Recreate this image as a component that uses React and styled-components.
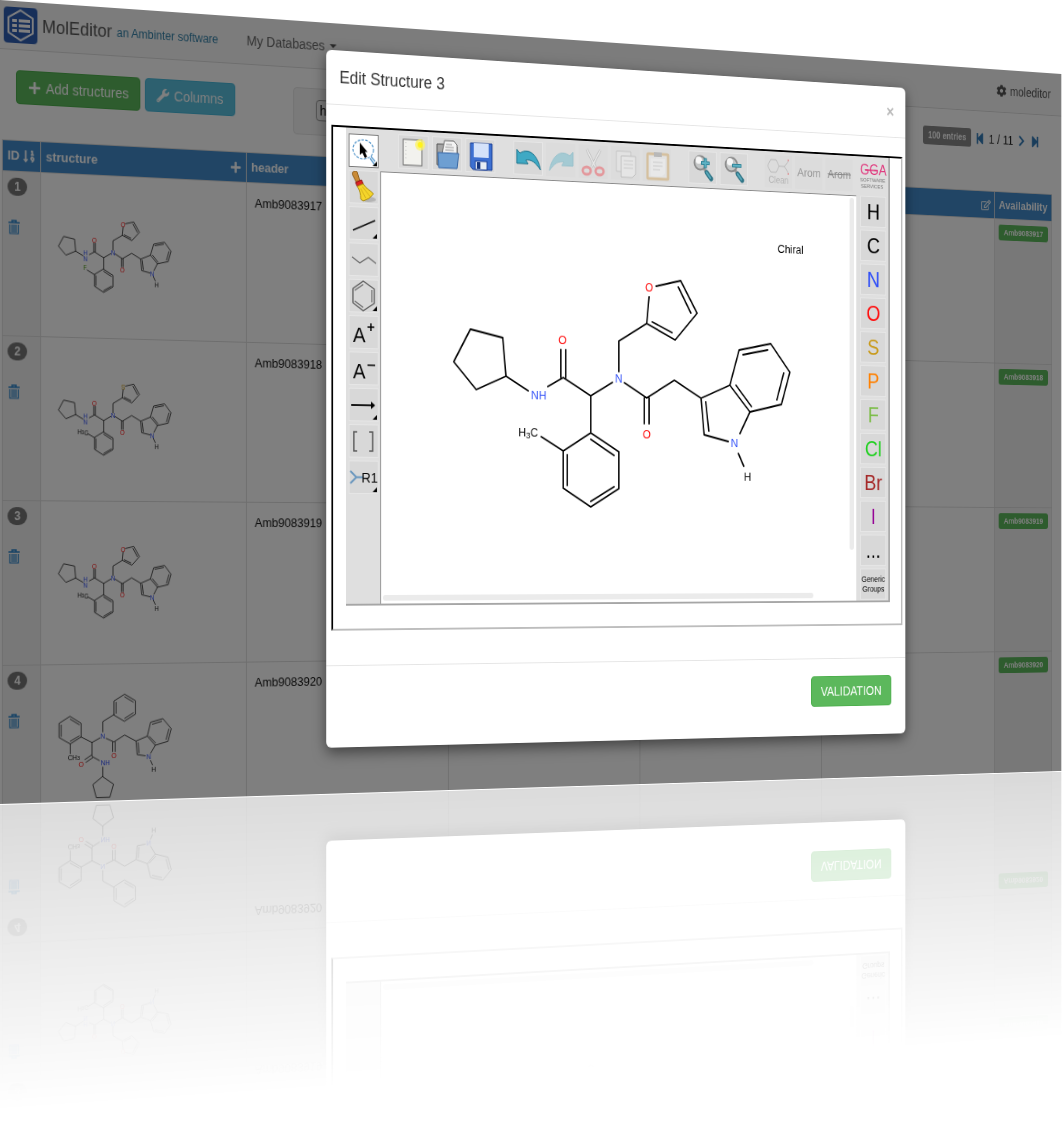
import React from "react";
import styled, { createGlobalStyle, css } from "styled-components";
import {
  FaPlus,
  FaWrench,
  FaCog,
  FaStepBackward,
  FaStepForward,
  FaChevronRight,
  FaRegEdit,
  FaSortNumericDown,
} from "react-icons/fa";

const GlobalStyle = createGlobalStyle`
  *, *::before, *::after { box-sizing: border-box; }
  body {
    margin: 0;
    background: #fff;
    color: #333;
    font-family: "Liberation Sans", Arial, sans-serif;
    font-size: 14px;
    line-height: 20px;
  }
  button, select { font-family: inherit; }
`;

/* ---------- 3D stage ---------- */

const Stage = styled.div`
  height: 100vh;
  overflow: hidden;
  perspective: 2900px;
  perspective-origin: 0 556px;
`;

const Plane = styled.div`
  position: relative;
  width: 122.6%;
  max-height: 804px;
  overflow: hidden;
  background: #fff;
  transform: rotateY(20deg);
  transform-origin: 0 0;
  -webkit-box-reflect: below 1px linear-gradient(transparent 62%, rgba(0, 0, 0, 0.28));
`;

/* ---------- Page behind the dialog ---------- */

const Navbar = styled.header`
  display: flex;
  align-items: center;
  height: 49px;
  padding: 0 15px 0 4px;
  background: #f8f8f8;
  border-bottom: 1px solid #ddd;
`;

const Brand = styled.a`
  display: flex;
  align-items: center;
  gap: 5px;
  color: #555;
  font-size: 18px;
  text-decoration: none;
`;

const Tagline = styled.small`
  color: #3180a8;
  font-size: 12px;
  line-height: 16px;
  padding-top: 2px;
`;

const NavMenu = styled.button`
  display: flex;
  align-items: center;
  gap: 6px;
  margin-left: 32px;
  padding: 0;
  border: 0;
  background: none;
  color: #666;
  font-size: 14px;
  &::after {
    content: "";
    border: 4px solid transparent;
    border-top-color: #555;
    border-bottom: 0;
  }
`;

const UserLink = styled.a`
  display: flex;
  align-items: center;
  gap: 5px;
  margin-left: auto;
  color: #555;
  text-decoration: none;
`;

const Tools = styled.div`
  display: flex;
  align-items: flex-start;
  height: 90px;
  padding: 20px 30px 0 17px;
  gap: 5px;
`;

const Button = styled.button`
  display: inline-flex;
  align-items: center;
  gap: 5px;
  height: 34px;
  padding: 0 12px;
  border: 1px solid ${(p) => p.$edge};
  border-radius: 4px;
  background: ${(p) => p.$fill};
  color: #fff;
  font-size: 14px;
`;

const Well = styled.div`
  width: 420px;
  height: 49px;
  margin-left: 61px;
  padding: 11px 25px;
  border: 1px solid #e3e3e3;
  border-radius: 4px;
  background: #f5f5f5;
`;

const FieldSelect = styled.select`
  height: 22px;
  padding: 0;
  border: 1px solid #999;
  border-radius: 4px;
  background: #f4f4f4;
  color: #111;
  font-size: 14px;
`;

const Pager = styled.nav`
  display: flex;
  align-items: center;
  gap: 5px;
  margin-left: auto;
  color: #222;
  a {
    display: flex;
    color: #337ab7;
  }
`;

const Count = styled.span`
  padding: 0 7px;
  border-radius: 3px;
  background: #888;
  color: #fff;
  font-size: 10px;
  font-weight: bold;
  line-height: 21px;
`;

const Grid = styled.table`
  width: calc(100% - 15px);
  margin-left: 2px;
  border-collapse: collapse;
  table-layout: fixed;
`;

const HeadCell = styled.th`
  height: 31px;
  padding: 0 5px;
  border: 1px solid #ddd;
  background: #428bca;
  color: #fff;
  font-size: 13px;
  text-align: left;
`;

const HeadInner = styled.div`
  display: flex;
  align-items: center;
  justify-content: space-between;
`;

const Cell = styled.td`
  height: 165px;
  padding: ${(p) => p.$pad || "0"};
  border: 1px solid #ddd;
  background: ${(p) => (p.$tint ? "#f1f1f1" : "#fff")};
  color: #111;
  font-size: 13px;
  line-height: 18px;
  vertical-align: ${(p) => p.$align || "top"};
`;

const RowTools = styled.div`
  display: flex;
  flex-direction: column;
  align-items: flex-start;
  gap: 24px;
`;

const RowNumber = styled.span`
  min-width: 21px;
  border-radius: 9px;
  background: #777;
  color: #fff;
  font-size: 12px;
  font-weight: bold;
  line-height: 18px;
  text-align: center;
`;

const IconButton = styled.button`
  display: flex;
  padding: 0;
  border: 0;
  background: none;
  color: #2e86cc;
`;

const StockLink = styled.a`
  display: block;
  border-radius: 3px;
  background: #5cb85c;
  color: #fff;
  font-size: 9px;
  font-weight: bold;
  line-height: 18px;
  text-align: center;
  text-decoration: none;
`;

/* ---------- Dialog ---------- */

const Overlay = styled.div`
  position: absolute;
  inset: 0;
  padding: 28px 0 0 27.8%;
  background: rgba(0, 0, 0, 0.5);
`;

const Dialog = styled.section`
  width: 77%;
  border-radius: 6px;
  background: #fff;
  box-shadow: 0 5px 15px rgba(0, 0, 0, 0.5);
`;

const DialogHeader = styled.div`
  display: flex;
  align-items: center;
  justify-content: space-between;
  height: 57px;
  padding: 0 15px;
  border-bottom: 1px solid #e5e5e5;
`;

const Title = styled.h1`
  margin: 0;
  font-size: 18px;
  font-weight: normal;
  line-height: 26px;
`;

const Close = styled.button`
  padding: 0;
  border: 0;
  background: none;
  color: #bbb;
  font-size: 18px;
  font-weight: bold;
  line-height: 18px;
`;

const DialogBody = styled.div`
  padding: 21px 4px 36px 6px;
`;

const Frame = styled.div`
  padding: 0 15px 24px;
  border: 2px solid #bdbdbd;
  border-top-color: #000;
  border-left-color: #000;
`;

const DialogFooter = styled.div`
  display: flex;
  justify-content: flex-end;
  height: 86px;
  padding: 19px;
  border-top: 1px solid #e5e5e5;
`;

/* ---------- Structure editor ---------- */

const Editor = styled.div`
  display: flex;
  background: #dfdfdf;
  border: solid #a6a6a6;
  border-width: 0 2px 2px 0;
`;

const LeftBar = styled.div`
  display: flex;
  flex: 0 0 40px;
  flex-direction: column;
  gap: 3px;
  padding: 6px 0 0 3px;
`;

const Middle = styled.div`
  display: flex;
  flex: 1;
  flex-direction: column;
`;

const TopBar = styled.div`
  display: flex;
  gap: 22px;
  height: 44px;
  padding: 4px 0 0 21px;
`;

const Group = styled.div`
  display: flex;
  gap: 4px;
`;

const RightBar = styled.div`
  display: flex;
  flex: 0 0 43px;
  flex-direction: column;
  gap: 3px;
  padding: 0 0 1px 5px;
`;

const Tool = styled.button`
  display: flex;
  flex: none;
  flex-direction: column;
  align-items: center;
  justify-content: center;
  width: 35px;
  height: 35px;
  padding: 0;
  border: 1px solid ${(p) => (p.$active ? "#777" : "#e6e6e6")};
  background: ${(p) => (p.$active ? "#fff" : "#d8d8d8")};
  color: ${(p) => p.$ink || "#000"};
  font-size: ${(p) => p.$size || 24}px;
  line-height: ${(p) => p.$line || 28}px;
  ${(p) =>
    p.$wide &&
    css`
      width: 36px;
      height: 36px;
    `}
  ${(p) =>
    p.$off &&
    css`
      border-color: transparent;
      background: #dcdcdc;
      svg {
        opacity: 0.35;
      }
    `}
`;

const Logo = styled.svg`
  width: 37px;
  height: 41px;
`;

const Canvas = styled.div`
  display: grid;
  flex: 1;
  grid-template: 1fr 6px / 1fr 6px;
  gap: 2px;
  padding: 2px 3px 3px 2px;
  border: solid #8a8a8a;
  border-width: 1px 0 0 1px;
  background: #fff;
`;

const ScrollV = styled.div`
  height: 394px;
  border-radius: 3px;
  background: #ebebeb;
`;

const ScrollH = styled.div`
  width: 92%;
  height: 6px;
  border-radius: 3px;
  background: #ebebeb;
`;

/* ---------- Molecules ---------- */

const BLUE = "#304ff7";
const RED = "#ff0d0d";

const mainBonds = [
  "M106 162L145 170L149 211L113 226L86 197Z",
  "M149 211L176 226",
  "M200 221L219 211L253 230L280 215",
  "M216 211V181M222 211V181",
  "M253 230V270",
  "M253 270L288 290V330L253 350L219 330V290Z",
  "M253 277L282 294M224 294V327M253 344L282 328",
  "M192 275L219 290",
  "M288 203V170L323 150",
  "M326 121L323 150L359 167L387 137L366 102L335 109",
  "M363 109L379 137M355 159L330 148",
  "M295 215L323 231L358 211L392 230",
  "M320 231V259M326 231V259",
  "M427 277L396 270L392 230L429 215L455 244L442 268",
  "M398 234L402 266",
  "M429 215L441 176L482 168L507 199L496 235L455 244",
  "M446 181L478 175M499 200L490 230M437 215L457 238",
  "M440 290L447 304",
].join("");

const benzylBonds = [
  "M220 674L255 695V736L220 756L184 736V695Z",
  "M220 682L249 699M249 733L220 748M191 733V699",
  "M220 756V785M255 736L290 753L316 740",
  "M325 722V691L361 671",
  "M361 671V630L396 610L431 630V671L396 691Z",
  "M368 667V634M396 618L424 634M424 667L396 683",
  "M336 742L361 753L396 733L433 752",
  "M357 753V782M365 753V782",
  "M463 797L437 793L433 752L470 738L496 766L481 790",
  "M440 757L443 788",
  "M470 738L481 696L521 686L549 717L538 755L496 766",
  "M487 702L517 694M541 718L532 749M477 739L497 759",
  "M481 812L487 825",
  "M290 753V795L314 808M288 791L267 804M292 799L271 812",
  "M325 828V857",
  "M325 857L360 880L348 919H304L293 881Z",
].join("");

const Atom = ({ x, y, fill = "#111", children }) => (
  <text x={x} y={y} fill={fill} textAnchor="middle" dominantBaseline="central">
    {children}
  </text>
);

const Label = ({ x, y, before, after }) => (
  <text x={x} y={y} fill="#111" textAnchor="middle" dominantBaseline="central">
    {before}
    <tspan fontSize="0.75em" dy="2">3</tspan>
    <tspan dy="-2">{after}</tspan>
  </text>
);

function MainAtoms({ hetero = "O", substituent = "CH3", stacked }) {
  return (
    <>
      {stacked ? (
        <>
          <Atom x={185} y={214} fill={BLUE}>H</Atom>
          <Atom x={185} y={235} fill={BLUE}>N</Atom>
        </>
      ) : (
        <Atom x={189} y={231} fill={BLUE}>NH</Atom>
      )}
      <Atom x={218} y={171} fill={RED}>O</Atom>
      <Atom x={288} y={211} fill={BLUE}>N</Atom>
      <Atom x={326} y={111} fill={hetero === "S" ? "#c99a19" : RED}>{hetero}</Atom>
      <Atom x={323} y={271} fill={RED}>O</Atom>
      <Atom x={435} y={279} fill={BLUE}>N</Atom>
      <Atom x={452} y={316}>H</Atom>
      {substituent === "F" ? (
        <Atom x={184} y={268} fill="#4f9a1a">F</Atom>
      ) : (
        <Label x={176} y={271} before="H" after="C" />
      )}
    </>
  );
}

const MolArt = styled.svg`
  display: block;
  fill: none;
  stroke-linecap: round;
  stroke-linejoin: round;
  font-family: "Liberation Sans", Arial, sans-serif;
`;

function Thumb({ row }) {
  if (row.benzyl) {
    return (
      <MolArt width="132" height="118" viewBox="178 588 390 350" fontSize="21" aria-label={row.name}>
        <path d={benzylBonds} stroke="#222" strokeWidth="2.4" />
        <Atom x={325} y={734} fill={BLUE}>N</Atom>
        <Atom x={361} y={795} fill={RED}>O</Atom>
        <Atom x={255} y={817} fill={RED}>O</Atom>
        <Atom x={333} y={816} fill={BLUE}>NH</Atom>
        <Atom x={475} y={801} fill={BLUE}>N</Atom>
        <Atom x={491} y={838}>H</Atom>
        <text x="212" y="804" fill="#111">
          CH<tspan fontSize="0.75em">3</tspan>
        </text>
      </MolArt>
    );
  }
  return (
    <MolArt width="129" height="79" viewBox="80 94 440 270" fontSize="22" aria-label={row.name}>
      <path d={mainBonds} stroke="#222" strokeWidth="2.8" />
      <MainAtoms hetero={row.hetero} substituent={row.substituent} stacked />
    </MolArt>
  );
}

/* ---------- Icons ---------- */

const BrandIcon = () => (
  <svg width="36" height="36" viewBox="0 0 36 36" aria-hidden="true">
    <rect width="36" height="36" rx="4" fill="#2f5fb3" />
    <path d="M18 3L31 10.500V25.500L18 33L5 25.500V10.500Z" fill="none" stroke="#fff" strokeWidth="2" />
    <g fill="#fff">
      <path d="M9 12h5v3H9zM16 12h12v3H16zM9 17h5v3H9zM16 17h12v3H16zM9 22h5v3H9zM16 22h12v3H16z" />
    </g>
  </svg>
);

const TrashIcon = () => (
  <svg width="14" height="15" viewBox="0 0 14 15" fill="none" stroke="currentColor" aria-hidden="true">
    <path d="M1 3H13M5 2.500V1H9V2.500" strokeWidth="1.600" />
    <path d="M2.500 5V14H11.500V5M5 5V13M7 5V13M9 5V13" strokeWidth="1.200" />
  </svg>
);

const Corner = () => <path d="M32 27V32H27Z" fill="#000" />;

const Glyph = ({ children }) => (
  <svg width="33" height="33" viewBox="0 0 33 33" fill="none" aria-hidden="true">
    {children}
  </svg>
);

const LassoIcon = () => (
  <Glyph>
    <ellipse cx="16" cy="15" rx="12" ry="10" stroke="#4a90c8" strokeWidth="1.200" strokeDasharray="3 1.500" />
    <path d="M25 22L30 27M24 24L29 30" stroke="#4a90c8" strokeWidth="1.200" />
    <path d="M12 8V21L15 18.500L18 24L20.500 22.500L18 17.500H21Z" fill="#000" />
    <Corner />
  </Glyph>
);

const BroomIcon = () => (
  <Glyph>
    <ellipse cx="22" cy="29" rx="9" ry="3" fill="#b4b4b4" />
    <path d="M6 0C3 1 3 3 4 5L8 12L12 10L9 1C8.500 0 7 0 6 0Z" fill="#c98a35" stroke="#8a5a18" />
    <path d="M7 12L14 9L16 13L9 16Z" fill="#d22" stroke="#811" />
    <path d="M9 16L16 13C19 18 24 19 28 23L23 28L16 31L13 29C13 24 12 20 9 16Z" fill="#f5d52a" stroke="#a98a10" />
    <path d="M13 18L19 28M15 16L24 26" stroke="#d0ac1c" />
  </Glyph>
);

const BondIcon = () => (
  <Glyph>
    <path d="M4 24L30 13" stroke="#111" strokeWidth="1.600" />
    <Corner />
  </Glyph>
);

const ChainIcon = () => (
  <Glyph>
    <path d="M3 14L12 20L22 14L31 20" stroke="#666" strokeWidth="1.200" />
  </Glyph>
);

const BenzeneIcon = () => (
  <Glyph>
    <path d="M16 1L29 9V24L16 32L4 24V9Z" stroke="#555" strokeWidth="1.300" />
    <path d="M6 11L16 4.500M26 10V23M6 22L16 28.500" stroke="#666" strokeWidth="1.200" />
    <Corner />
  </Glyph>
);

const ChargeIcon = ({ sign }) => (
  <Glyph>
    <text x="4" y="27" fontSize="22" fill="#000">A</text>
    <path d={sign === "+" ? "M21 11H29M25 7V15" : "M21 13H30"} stroke="#000" strokeWidth="1.500" />
  </Glyph>
);

const ArrowIcon = () => (
  <Glyph>
    <path d="M2 17H27" stroke="#000" strokeWidth="1.800" />
    <path d="M25 13L30 17L25 21Z" fill="#000" />
    <Corner />
  </Glyph>
);

const BracketIcon = () => (
  <Glyph>
    <path d="M9 7H5V27H9M23 7H27V27H23" stroke="#555" strokeWidth="1.600" />
  </Glyph>
);

const RGroupIcon = () => (
  <Glyph>
    <path d="M1 10L8 16.500L1 23M8 16.500H16" stroke="#6795bd" strokeWidth="2" />
    <text x="14" y="22" fontSize="15" fill="#000">R1</text>
    <Corner />
  </Glyph>
);

const NewIcon = () => (
  <Glyph>
    <rect x="4" y="3" width="22" height="27" fill="#f2f2ee" stroke="#666" />
    <path d="M7 6V26" stroke="#bbb" strokeDasharray="1 3" />
    <circle cx="24" cy="8" r="6" fill="#fbf36a" opacity="0.8" />
    <circle cx="24" cy="8" r="3" fill="#fff21a" />
  </Glyph>
);

const OpenIcon = () => (
  <Glyph>
    <path d="M4 28V6H12L13 8H28V28Z" fill="#a5a5a5" stroke="#555" />
    <path d="M10 16L13 2H24L28 6V16Z" fill="#f3f3f3" stroke="#666" />
    <path d="M15 6H22M14 9H24M14 12H24" stroke="#999" />
    <path d="M5 15H30L28 31H6Z" fill="#6e9fd2" stroke="#3465a4" />
  </Glyph>
);

const SaveIcon = () => (
  <Glyph>
    <path d="M4 3H30V31H7L4 28Z" fill="#3d70d2" stroke="#1b3f94" />
    <rect x="8" y="3" width="18" height="15" fill="#d4e2fa" />
    <rect x="10" y="22" width="14" height="9" fill="#e8edf5" stroke="#1b3f94" />
    <rect x="12" y="23" width="4" height="7" fill="#16357e" />
  </Glyph>
);

const UndoIcon = () => (
  <Glyph>
    <path d="M2 22V7L6 11C17 4 28 12 31 28C25 20 20 17 13 18L16 22Z" fill="#3fa9c4" stroke="#1b7089" />
  </Glyph>
);

const RedoIcon = () => (
  <Glyph>
    <path d="M31 22V7L27 11C16 4 5 12 2 28C8 20 13 17 20 18L17 22Z" fill="#3fa9c4" stroke="#1b8fae" />
  </Glyph>
);

const CutIcon = () => (
  <Glyph>
    <path d="M8 3L19 22M25 3L14 22" stroke="#777" strokeWidth="3" />
    <path d="M8 3L19 22M25 3L14 22" stroke="#fff" strokeWidth="1.500" />
    <ellipse cx="8" cy="26" rx="5" ry="4" stroke="#f01c26" strokeWidth="3" />
    <ellipse cx="24" cy="26" rx="5" ry="4" stroke="#f01c26" strokeWidth="3" />
  </Glyph>
);

const CopyIcon = () => (
  <Glyph>
    <path d="M5 3H23V25H5Z" fill="#eee" stroke="#999" />
    <path d="M11 8H29V27L25 31H11Z" fill="#f8f8f8" stroke="#888" />
    <path d="M14 13H26M14 17H26M14 21H26" stroke="#aaa" />
  </Glyph>
);

const PasteIcon = () => (
  <Glyph>
    <rect x="4" y="4" width="26" height="27" rx="1" fill="#eee" stroke="#c98d30" strokeWidth="3" />
    <path d="M8 9H26V25L22 28H8Z" fill="#fff" />
    <path d="M12 2H22V7H12Z" fill="#777" />
    <path d="M11 13H23M11 17H23M11 21H20" stroke="#aaa" />
  </Glyph>
);

const ZoomIcon = ({ sign }) => (
  <Glyph>
    <path d="M17 16L21 21" stroke="#999" strokeWidth="3" />
    <path d="M21 21L27 28" stroke="#2f7486" strokeWidth="5" strokeLinecap="round" />
    <path d="M21 21L26 27" stroke="#58a9ba" strokeWidth="2" strokeLinecap="round" />
    <circle cx="13" cy="11" r="7.500" fill="#c4c6c6" stroke="#8a8a8a" strokeWidth="2" />
    <circle cx="11" cy="8" r="4" fill="#f6f6f6" />
    <path d={sign === "+" ? "M14 11H25M19.500 5.500V16.500" : "M14 12H26"} stroke="#2d8296" strokeWidth="4" />
    <path d={sign === "+" ? "M15 11H24M19.500 6.500V15.500" : "M15 12H25"} stroke="#5fb2c4" strokeWidth="2" />
  </Glyph>
);

const CleanIcon = () => (
  <svg width="32" height="19" viewBox="0 0 32 19" fill="none" stroke="#777" aria-hidden="true">
    <path d="M6 2H13L17 9L13 16H6L2 9ZM17 9H24L29 3M24 9L29 16" />
    <path d="M29 1V3M29 16V18" stroke="#e0343c" strokeWidth="2" />
  </svg>
);

/* ---------- Data ---------- */

const rows = [
  { id: 1, name: "Amb9083917", hetero: "O", substituent: "F" },
  { id: 2, name: "Amb9083918", hetero: "S" },
  { id: 3, name: "Amb9083919", hetero: "O" },
  { id: 4, name: "Amb9083920", benzyl: true },
];

const leftTools = [
  ["Select", <LassoIcon />],
  ["Erase", <BroomIcon />],
  ["Bond", <BondIcon />],
  ["Chain", <ChainIcon />],
  ["Ring", <BenzeneIcon />],
  ["Charge plus", <ChargeIcon sign="+" />],
  ["Charge minus", <ChargeIcon sign="-" />],
  ["Reaction arrow", <ArrowIcon />],
  ["S-group", <BracketIcon />],
  ["R-group", <RGroupIcon />],
];

const elements = [
  ["H", "#000"],
  ["C", "#000"],
  ["N", BLUE],
  ["O", RED],
  ["S", "#c99a19"],
  ["P", "#ff8000"],
  ["F", "#78bc42"],
  ["Cl", "#1fd01f"],
  ["Br", "#a62929"],
  ["I", "#940094"],
  ["...", "#000"],
];

const TopTool = ({ label, off, children, ...rest }) => (
  <Tool $wide $off={off} disabled={off} aria-label={label} {...rest}>
    {children}
  </Tool>
);

const Struck = styled.s`
  color: inherit;
`;

function StructureEditor() {
  return (
    <Editor>
      <LeftBar>
        {leftTools.map(([label, icon], i) => (
          <Tool key={label} aria-label={label} $active={i === 0}>
            {icon}
          </Tool>
        ))}
      </LeftBar>
      <Middle>
        <TopBar>
          <Group>
            <TopTool label="New"><NewIcon /></TopTool>
            <TopTool label="Open"><OpenIcon /></TopTool>
            <TopTool label="Save"><SaveIcon /></TopTool>
          </Group>
          <Group>
            <TopTool label="Undo"><UndoIcon /></TopTool>
            <TopTool label="Redo" off><RedoIcon /></TopTool>
            <TopTool label="Cut" off><CutIcon /></TopTool>
            <TopTool label="Copy" off><CopyIcon /></TopTool>
            <TopTool label="Paste" off><PasteIcon /></TopTool>
          </Group>
          <Group>
            <TopTool label="Zoom in"><ZoomIcon sign="+" /></TopTool>
            <TopTool label="Zoom out"><ZoomIcon sign="-" /></TopTool>
          </Group>
          <Group>
            <TopTool label="Clean" off $ink="#b4b4b4" $size={10} $line={12}>
              <CleanIcon />
              Clean
            </TopTool>
            <TopTool label="Arom" off $ink="#999" $size={13}>Arom</TopTool>
            <TopTool label="Dearom" off $ink="#888" $size={13}>
              <Struck>Arom</Struck>
            </TopTool>
          </Group>
        </TopBar>
        <Canvas>
          <MolArt width="582" height="440" viewBox="2 2 582 440" fontSize="13" aria-label="Structure 3">
            <path d={mainBonds} stroke="#000" strokeWidth="1.800" />
            <MainAtoms />
            <text x="491" y="67" fill="#000">Chiral</text>
          </MolArt>
          <ScrollV />
          <ScrollH />
        </Canvas>
      </Middle>
      <RightBar>
        <Logo viewBox="0 0 37 41" aria-label="GGA Software Services">
          <text x="0" y="20" fontSize="16" fill="#e0337a">GGA</text>
          <path d="M7 15H22" stroke="#e0337a" strokeWidth="1.500" />
          <text x="0" y="28" fontSize="6" fill="#777">SOFTWARE</text>
          <text x="1" y="35" fontSize="6" fill="#777">SERVICES</text>
        </Logo>
        {elements.map(([symbol, ink]) => (
          <Tool key={symbol} $ink={ink}>{symbol}</Tool>
        ))}
        <Tool $size={9} $line={11}>Generic Groups</Tool>
      </RightBar>
    </Editor>
  );
}

function StructureTable() {
  return (
    <Grid>
      <colgroup>
        <col style={{ width: 41 }} />
        <col style={{ width: 227 }} />
        <col />
        <col />
        <col />
        <col />
        <col style={{ width: 80 }} />
      </colgroup>
      <thead>
        <tr>
          <HeadCell>
            <HeadInner>ID <FaSortNumericDown size={14} /></HeadInner>
          </HeadCell>
          <HeadCell>
            <HeadInner>structure <FaPlus size={13} /></HeadInner>
          </HeadCell>
          <HeadCell>header</HeadCell>
          <HeadCell />
          <HeadCell />
          <HeadCell>
            <HeadInner><span /><FaRegEdit size={13} /></HeadInner>
          </HeadCell>
          <HeadCell>Availability</HeadCell>
        </tr>
      </thead>
      <tbody>
        {rows.map((row) => (
          <tr key={row.id}>
            <Cell $tint $pad="6px 5px">
              <RowTools>
                <RowNumber>{row.id}</RowNumber>
                <IconButton aria-label={`Delete ${row.name}`}><TrashIcon /></IconButton>
              </RowTools>
            </Cell>
            <Cell $pad="0 0 0 17px" $align="middle"><Thumb row={row} /></Cell>
            <Cell $pad="12px 9px">{row.name}</Cell>
            <Cell />
            <Cell />
            <Cell />
            <Cell $pad="6px 5px" $tint>
              <StockLink href="#">{row.name}</StockLink>
            </Cell>
          </tr>
        ))}
      </tbody>
    </Grid>
  );
}

export default function App() {
  return (
    <>
      <GlobalStyle />
      <Stage>
        <Plane>
          <Navbar>
            <Brand href="#">
              <BrandIcon />
              MolEditor
              <Tagline>an Ambinter software</Tagline>
            </Brand>
            <NavMenu>My Databases</NavMenu>
            <UserLink href="#"><FaCog size={14} /> moleditor</UserLink>
          </Navbar>
          <Tools>
            <Button $fill="#5cb85c" $edge="#4cae4c"><FaPlus size={14} /> Add structures</Button>
            <Button $fill="#5bc0de" $edge="#46b8da"><FaWrench size={14} /> Columns</Button>
            <Well>
              <FieldSelect aria-label="Search field" defaultValue="header">
                <option>header</option>
              </FieldSelect>
            </Well>
            <Pager>
              <Count>100 entries</Count>
              <a href="#" aria-label="First page"><FaStepBackward size={14} /></a>
              <span>1 / 11</span>
              <a href="#" aria-label="Next page"><FaChevronRight size={14} /></a>
              <a href="#" aria-label="Last page"><FaStepForward size={14} /></a>
            </Pager>
          </Tools>
          <StructureTable />
          <Overlay>
            <Dialog role="dialog" aria-labelledby="dialog-title">
              <DialogHeader>
                <Title id="dialog-title">Edit Structure 3</Title>
                <Close aria-label="Close">×</Close>
              </DialogHeader>
              <DialogBody>
                <Frame>
                  <StructureEditor />
                </Frame>
              </DialogBody>
              <DialogFooter>
                <Button $fill="#5cb85c" $edge="#4cae4c">VALIDATION</Button>
              </DialogFooter>
            </Dialog>
          </Overlay>
        </Plane>
      </Stage>
    </>
  );
}
